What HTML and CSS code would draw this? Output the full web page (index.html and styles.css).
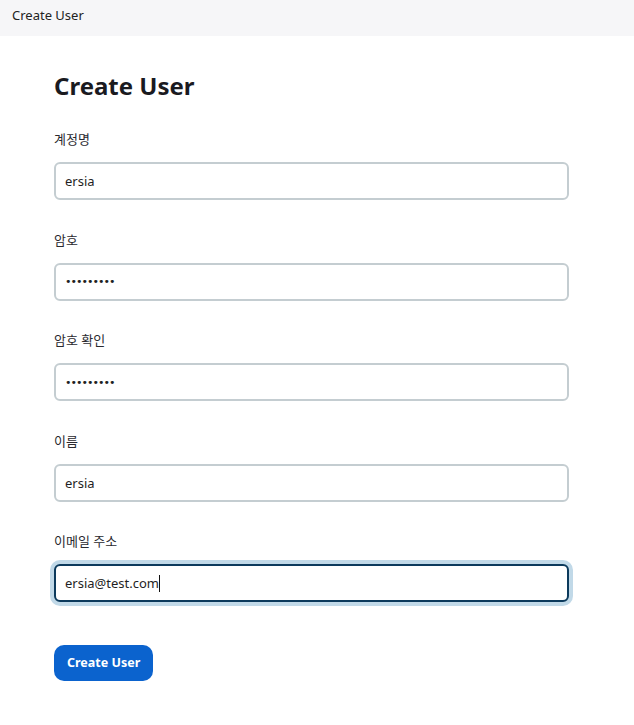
FILE: index.html
```html
<!DOCTYPE html>
<html lang="ko">
<head>
<meta charset="utf-8">
<title>Create User</title>
<link rel="stylesheet" href="styles.css">
</head>
<body>
<header class="topbar">Create User</header>
<main class="content">
  <h1 class="title">Create User</h1>
  <form class="form">
    <div class="field">
      <label class="label">계정명</label>
      <input class="input" type="text" value="ersia">
    </div>
    <div class="field">
      <label class="label">암호</label>
      <input class="input pw" type="password" value="123456789">
    </div>
    <div class="field">
      <label class="label">암호 확인</label>
      <input class="input pw" type="password" value="123456789">
    </div>
    <div class="field">
      <label class="label">이름</label>
      <input class="input" type="text" value="ersia">
    </div>
    <div class="field">
      <label class="label">이메일 주소</label>
      <div class="input focused"><span>ersia@test.com</span><span class="caret"></span></div>
    </div>
    <button class="btn" type="button">Create User</button>
  </form>
</main>
</body>
</html>
```
FILE: styles.css
```css
* { box-sizing: border-box; }
body {
  margin: 0;
  background: #ffffff;
  font-family: "Noto Sans", "Noto Sans CJK KR", sans-serif;
  color: #1f1f24;
}
.topbar {
  height: 36px;
  background: #f6f6f8;
  padding-left: 12px;
  font-size: 13px;
  line-height: 31px;
  color: #222;
}
.content {
  padding: 34px 0 0 54px;
  width: 569px;
}
.title {
  margin: 0 0 27px 0;
  font-size: 24px;
  line-height: 32px;
  font-weight: 700;
  color: #1a1a1f;
}
.field {
  margin-bottom: 29.6px;
}
.label {
  display: block;
  font-size: 13px;
  line-height: 20px;
  margin-bottom: 13px;
  color: #2a2a2f;
}
.input {
  display: flex;
  align-items: center;
  width: 515px;
  height: 38px;
  border: 2px solid #c4cdd1;
  border-radius: 6px;
  padding: 0 9px;
  font-family: "Noto Sans", "Noto Sans CJK KR", sans-serif;
  font-size: 13px;
  color: #1f1f24;
  background: #fff;
  outline: none;
}
.pw {
  font-family: "DejaVu Sans", sans-serif;
  font-size: 11px;
  letter-spacing: -1px;
}
.focused {
  border-color: #0c3a5c;
  box-shadow: 0 0 0 4px #c1d9e8;
}
.caret {
  display: inline-block;
  width: 1px;
  height: 17px;
  background: #111;
}
.btn {
  margin-top: 13px;
  height: 36px;
  padding: 0 13px;
  border: none;
  border-radius: 10px;
  background: #0b63ce;
  color: #fff;
  font-family: "Noto Sans", sans-serif;
  font-size: 12.5px;
  font-weight: 700;
}
```
